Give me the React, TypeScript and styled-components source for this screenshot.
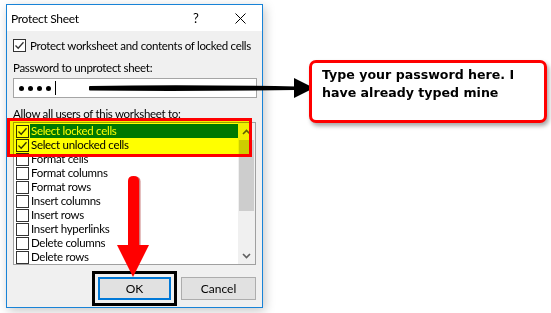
import React from "react";
import styled, { createGlobalStyle, css } from "styled-components";

const GlobalStyle = createGlobalStyle`
  body {
    margin: 0;
    background: #ffffff;
    font-family: "Segoe UI", Lato, "Liberation Sans", sans-serif;
    font-size: 11.5px;
    letter-spacing: -0.3px;
    color: #000000;
  }
`;

const Page = styled.div`
  position: relative;
  width: 551px;
  height: 313px;
  padding: 4px 0 0 6px;
  box-sizing: border-box;
  overflow: hidden;
`;

const Dialog = styled.div`
  width: 257px;
  height: 304px;
  box-sizing: border-box;
  border: 1px solid #1883d7;
  background: #f0f0f0;
  box-shadow: 2px 3px 10px rgba(0, 0, 0, 0.22);
  display: flex;
  flex-direction: column;
`;

const TitleBar = styled.div`
  height: 26px;
  background: #ffffff;
  display: flex;
  align-items: center;
  padding-left: 4px;
  font-size: 12px;
`;

const Title = styled.div`
  flex: 1;
`;

const HelpButton = styled.div`
  width: 41px;
  font-size: 13px;
`;

const CloseButton = styled.div`
  width: 28px;
  height: 26px;
  display: flex;
  align-items: center;
  padding-left: 1px;
  box-sizing: border-box;
`;

const Body = styled.div`
  flex: 1;
  padding: 0 6px;
  display: flex;
  flex-direction: column;
`;

const CheckRow = styled.label`
  margin-top: 8px;
  height: 13px;
  display: flex;
  align-items: center;
  gap: 4px;
  white-space: nowrap;
`;

const Box = styled.span`
  width: 13px;
  height: 13px;
  flex: none;
  box-sizing: border-box;
  border: 1px solid #333333;
  background: #ffffff;
  display: flex;
  align-items: center;
  justify-content: center;
`;

const FieldLabel = styled.div<{ $gap: number }>`
  margin-top: ${(p) => p.$gap}px;
  line-height: 15px;
  height: 15px;
  white-space: nowrap;
`;

const Input = styled.div`
  margin-top: 3px;
  width: 244px;
  height: 20px;
  box-sizing: border-box;
  border: 1px solid #a5a5a5;
  background: #ffffff;
  display: flex;
  align-items: center;
  padding-left: 5px;
  gap: 2px;
`;

const Dot = styled.span`
  width: 5px;
  height: 5px;
  border-radius: 50%;
  background: #000000;
  margin-right: 2px;
`;

const Caret = styled.span`
  width: 1px;
  height: 14px;
  background: #000000;
`;

const ListBox = styled.div`
  margin-top: 1px;
  width: 243px;
  height: 143px;
  box-sizing: border-box;
  border: 1px solid #a0a0a0;
  background: #ffffff;
  display: flex;
`;

const Rows = styled.div`
  flex: 1;
  padding-top: 1px;
  overflow: hidden;
`;

const Row = styled.div`
  height: 14px;
  display: flex;
  align-items: center;
  padding-left: 2px;
  gap: 1px;
  white-space: nowrap;
`;

const RowText = styled.span<{ $selected?: boolean }>`
  flex: 1;
  height: 14px;
  line-height: 14px;
  padding-left: 1px;
  ${(p) =>
    p.$selected &&
    css`
      background: #0078d7;
      color: #ffffff;
    `}
`;

const ScrollBar = styled.div`
  width: 17px;
  background: #f0f0f0;
  display: flex;
  flex-direction: column;
`;

const ScrollArrow = styled.div`
  height: 17px;
  display: flex;
  align-items: center;
  justify-content: center;
`;

const Thumb = styled.div`
  margin: 0 1px;
  height: 71px;
  background: #cdcdcd;
`;

const Track = styled.div`
  flex: 1;
`;

const ButtonRow = styled.div`
  margin-top: 12px;
  display: flex;
  justify-content: flex-end;
  gap: 10px;
`;

const Button = styled.div<{ $default?: boolean }>`
  width: ${(p) => (p.$default ? 73 : 75)}px;
  height: 23px;
  box-sizing: border-box;
  background: #e1e1e1;
  border: ${(p) => (p.$default ? "2px solid #0078d7" : "1px solid #adadad")};
  display: flex;
  align-items: center;
  justify-content: center;
  font-size: 12px;
  letter-spacing: 0;
  ${(p) =>
    p.$default &&
    css`
      outline: 3px solid #000000;
      outline-offset: 3px;
    `}
`;

/* annotations drawn over the screenshot */
const YellowMark = styled.div`
  position: absolute;
  left: 10px;
  top: 121px;
  width: 239px;
  height: 33px;
  background: #ffff00;
  mix-blend-mode: multiply;
`;

const RedFrame = styled.div`
  position: absolute;
  left: 7px;
  top: 118px;
  width: 245px;
  height: 39px;
  box-sizing: border-box;
  border: 3px solid #ff0000;
`;

const Callout = styled.div`
  position: absolute;
  left: 309px;
  top: 60px;
  width: 238px;
  height: 63px;
  box-sizing: border-box;
  border: 3px solid #ff0000;
  border-radius: 7px;
  background: #ffffff;
  box-shadow: 2px 3px 4px rgba(0, 0, 0, 0.35);
  padding: 3px 10px;
  font-family: "DejaVu Sans", Verdana, sans-serif;
  font-weight: bold;
  font-size: 12.6px;
  letter-spacing: 0;
  line-height: 18px;
  color: #000000;
`;

const Overlay = styled.svg`
  position: absolute;
  overflow: visible;
`;

const Check = () => (
  <svg width="11" height="11" viewBox="0 0 11 11">
    <path d="M1.5 5.5 L4.2 8.3 L9.5 2.2" fill="none" stroke="#333" strokeWidth="1.3" />
  </svg>
);

const Chevron = ({ up }: { up?: boolean }) => (
  <svg width="9" height="6" viewBox="0 0 9 6">
    <path
      d={up ? "M1 5 L4.5 1.5 L8 5" : "M1 1 L4.5 4.5 L8 1"}
      fill="none"
      stroke="#606060"
      strokeWidth="1.6"
    />
  </svg>
);

const items = [
  { label: "Select locked cells", checked: true, selected: true },
  { label: "Select unlocked cells", checked: true },
  { label: "Format cells" },
  { label: "Format columns" },
  { label: "Format rows" },
  { label: "Insert columns" },
  { label: "Insert rows" },
  { label: "Insert hyperlinks" },
  { label: "Delete columns" },
  { label: "Delete rows" },
];

export default function App() {
  return (
    <Page>
      <GlobalStyle />
      <Dialog>
        <TitleBar>
          <Title>Protect Sheet</Title>
          <HelpButton>?</HelpButton>
          <CloseButton>
            <svg width="11" height="11" viewBox="0 0 11 11">
              <path d="M0.5 0.5 L10.5 10.5 M10.5 0.5 L0.5 10.5" stroke="#000" strokeWidth="1" />
            </svg>
          </CloseButton>
        </TitleBar>
        <Body>
          <CheckRow>
            <Box>
              <Check />
            </Box>
            <span>Protect worksheet and contents of locked cells</span>
          </CheckRow>
          <FieldLabel $gap={8}>Password to unprotect sheet:</FieldLabel>
          <Input>
            <Dot />
            <Dot />
            <Dot />
            <Dot />
            <Caret />
          </Input>
          <FieldLabel $gap={8}>Allow all users of this worksheet to:</FieldLabel>
          <ListBox>
            <Rows>
              {items.map((it) => (
                <Row key={it.label}>
                  <Box>{it.checked && <Check />}</Box>
                  <RowText $selected={it.selected}>{it.label}</RowText>
                </Row>
              ))}
            </Rows>
            <ScrollBar>
              <ScrollArrow>
                <Chevron up />
              </ScrollArrow>
              <Thumb />
              <Track />
              <ScrollArrow>
                <Chevron />
              </ScrollArrow>
            </ScrollBar>
          </ListBox>
          <ButtonRow>
            <Button $default>OK</Button>
            <Button>Cancel</Button>
          </ButtonRow>
        </Body>
      </Dialog>

      <YellowMark />
      <RedFrame />

      <Overlay style={{ left: 88, top: 76 }} width="230" height="24" viewBox="0 0 230 24">
        <path d="M2 11 Q100 9.5 208 11.5 L208 13 Q100 14.5 2 13.5 Z" fill="#000" stroke="#000" strokeWidth="2" strokeLinejoin="round" />
        <path d="M206 2 L226 12 L206 22 Z" fill="#000" />
      </Overlay>

      <Overlay style={{ left: 115, top: 172 }} width="38" height="108" viewBox="0 0 38 108">
        <path d="M13 9 Q13 4 18.5 4 Q24 4 24 9 L24 74 L13 74 Z" fill="#9a0000" transform="translate(1.5 0.5)" opacity="0.5" />
        <path d="M13 9 Q13 4 18.5 4 Q24 4 24 9 L24 74 L13 74 Z" fill="#ff0000" />
        <path d="M2 73 L34 73 L18 105 Z" fill="#ff0000" />
      </Overlay>

      <Callout>
        Type your password here. I have already typed mine
      </Callout>
    </Page>
  );
}
